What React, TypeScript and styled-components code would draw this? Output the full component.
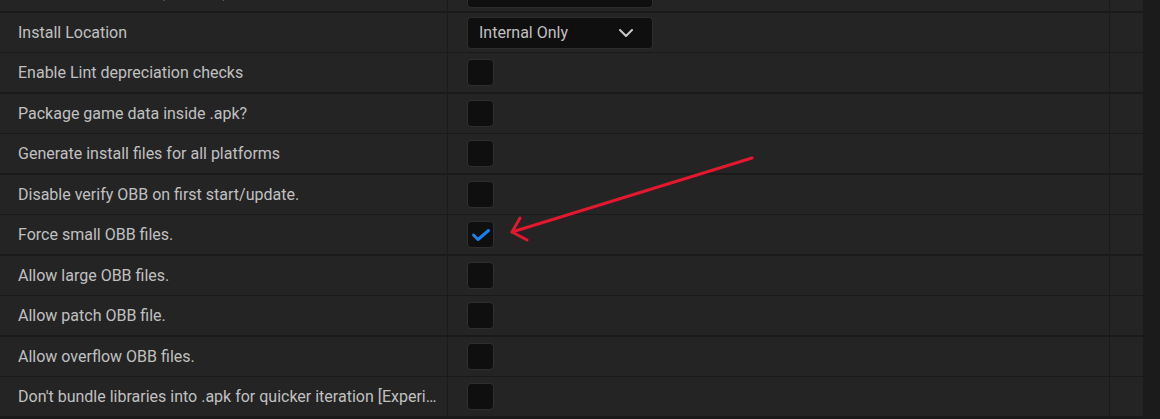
import styled, { createGlobalStyle } from "styled-components";

const GlobalStyle = createGlobalStyle`
  html, body {
    margin: 0;
    padding: 0;
    background: #1a1a1a;
    overflow: hidden;
  }
`;

const Page = styled.div`
  position: relative;
  width: 1160px;
  height: 419px;
  display: flex;
  overflow: hidden;
  font-family: Roboto, "Liberation Sans", sans-serif;
`;

const Table = styled.div`
  width: 1143px;
  margin-top: -28px;
  display: flex;
  flex-direction: column;
`;

const Scrollbar = styled.div`
  flex: 1;
  background: #1b1b1b;
`;

const Row = styled.div<{ gap: number }>`
  display: grid;
  grid-template-columns: 447px 1fr 33px;
  column-gap: 1px;
  height: 39px;
  margin-top: ${(p) => p.gap}px;
  background: #1a1a1a;
  flex-shrink: 0;
`;

const Label = styled.div`
  background: #242424;
  color: #c0c0c0;
  font-size: 16px;
  display: flex;
  align-items: center;
  padding: 0 7px 0 18px;
  min-width: 0;

  span {
    white-space: nowrap;
    overflow: hidden;
    text-overflow: ellipsis;
  }
`;

const Value = styled.div`
  background: #242424;
  display: flex;
  align-items: center;
  padding-left: 19px;
`;

const Extra = styled.div`
  background: #242424;
`;

const Dropdown = styled.div`
  width: 186px;
  height: 32px;
  box-sizing: border-box;
  background: #0f0f0f;
  border: 1px solid #2c2c2c;
  border-radius: 4px;
  display: flex;
  align-items: center;
  justify-content: space-between;
  padding: 0 19px 0 11px;
  color: #c0c0c0;
  font-size: 16px;
`;

const Check = styled.div`
  width: 27px;
  height: 27px;
  box-sizing: border-box;
  background: #0f0f0f;
  border: 1px solid #2f2f2f;
  border-radius: 4px;
  position: relative;

  svg {
    position: absolute;
    left: -1px;
    top: -1px;
  }
`;

const Annotation = styled.svg`
  position: absolute;
  left: 0;
  top: 0;
  pointer-events: none;
`;

type Setting = { label: string; kind: "dropdown" | "check"; value?: string; checked?: boolean };

const settings: Setting[] = [
  { label: "Target SDK Version (optional)", kind: "dropdown", value: "" },
  { label: "Install Location", kind: "dropdown", value: "Internal Only" },
  { label: "Enable Lint depreciation checks", kind: "check" },
  { label: "Package game data inside .apk?", kind: "check" },
  { label: "Generate install files for all platforms", kind: "check" },
  { label: "Disable verify OBB on first start/update.", kind: "check" },
  { label: "Force small OBB files.", kind: "check", checked: true },
  { label: "Allow large OBB files.", kind: "check" },
  { label: "Allow patch OBB file.", kind: "check" },
  { label: "Allow overflow OBB files.", kind: "check" },
  { label: "Don't bundle libraries into .apk for quicker iteration [Experimental]", kind: "check" },
];

function Chevron() {
  return (
    <svg width="14" height="8" viewBox="0 0 14 8">
      <path d="M1 1 L7 7 L13 1" fill="none" stroke="#c8c8c8" strokeWidth="2" strokeLinecap="round" strokeLinejoin="round" />
    </svg>
  );
}

function CheckBox({ checked }: { checked?: boolean }) {
  return (
    <Check>
      {checked && (
        <svg width="27" height="27" viewBox="0 0 27 27">
          <path d="M6.5 14 L11 18.5 L21.5 9.5" fill="none" stroke="#1a80ea" strokeWidth="3" strokeLinecap="round" strokeLinejoin="round" />
        </svg>
      )}
    </Check>
  );
}

export default function App() {
  return (
    <Page>
      <GlobalStyle />
      <Table>
        {settings.map((s, i) => (
          <Row key={i} gap={i === 0 ? 0 : i % 2 === 1 ? 2 : 1}>
            <Label>
              <span>{s.label}</span>
            </Label>
            <Value>
              {s.kind === "dropdown" ? (
                <Dropdown>
                  <span>{s.value}</span>
                  <Chevron />
                </Dropdown>
              ) : (
                <CheckBox checked={s.checked} />
              )}
            </Value>
            <Extra />
          </Row>
        ))}
      </Table>
      <Scrollbar />
      <Annotation width="1160" height="419" viewBox="0 0 1160 419">
        <g fill="none" stroke="#e3182f" strokeWidth="3" strokeLinecap="round" strokeLinejoin="round">
          <path d="M752 158 L512 232" />
          <path d="M520 218 L512 232 L527 240" />
        </g>
      </Annotation>
    </Page>
  );
}
